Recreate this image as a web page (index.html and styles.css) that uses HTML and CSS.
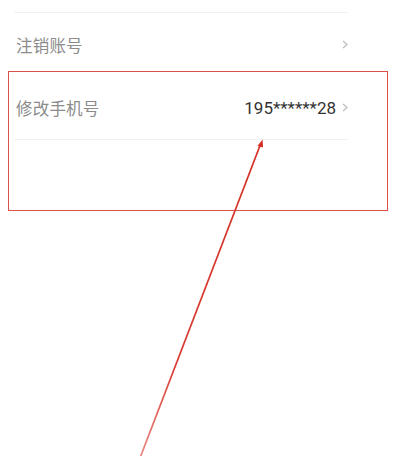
FILE: index.html
```html
<!DOCTYPE html>
<html lang="zh-CN">
<head>
<meta charset="utf-8">
<title>修改手机号</title>
<link rel="stylesheet" href="styles.css">
</head>
<body>
<div class="page">
  <div class="list">
    <div class="row-top"></div>
    <div class="row">
      <span class="label">注销账号</span>
      <span class="right">
        <svg class="chev" viewBox="0 0 6 9" width="6" height="9"><path d="M1 0.8 L5 4.5 L1 8.2" fill="none" stroke="#b5b5b5" stroke-width="1.1"/></svg>
      </span>
    </div>
    <div class="row row-line">
      <span class="label">修改手机号</span>
      <span class="right">
        <span class="value">195******28</span>
        <svg class="chev" viewBox="0 0 6 9" width="6" height="9"><path d="M1 0.8 L5 4.5 L1 8.2" fill="none" stroke="#b5b5b5" stroke-width="1.1"/></svg>
      </span>
    </div>
  </div>
  <div class="highlight"></div>
  <svg class="arrow" width="400" height="456" viewBox="0 0 400 456">
    <defs>
      <linearGradient id="fade" gradientUnits="userSpaceOnUse" x1="261" y1="143" x2="140" y2="458">
        <stop offset="0" stop-color="#d42e22"/>
        <stop offset="0.7" stop-color="#d93a2f"/>
        <stop offset="1" stop-color="#e88a84"/>
      </linearGradient>
    </defs>
    <line x1="140" y1="458" x2="261" y2="143" stroke="url(#fade)" stroke-width="1.7"/>
    <path d="M262.5 139.5 L257.5 146 L263 147.5 Z" fill="#d42e22"/>
  </svg>
</div>
</body>
</html>
```
FILE: styles.css
```css
html, body {
  margin: 0;
  padding: 0;
  background: #ffffff;
}
.page {
  position: relative;
  width: 400px;
  height: 456px;
  overflow: hidden;
  font-family: "Noto Sans CJK SC", "Noto Sans", sans-serif;
}
.list {
  display: flex;
  flex-direction: column;
  margin: 0 52px 0 14px;
}
.row-top {
  height: 12px;
  border-bottom: 1px solid #f1f1f1;
}
.row {
  height: 63px;
  display: flex;
  align-items: center;
  justify-content: space-between;
  padding-left: 2px;
}
.row-line {
  border-bottom: 1px solid #f1f1f1;
}
.label {
  font-size: 16.5px;
  color: #8c8c8c;
  letter-spacing: 0.2px;
}
.right {
  display: flex;
  align-items: center;
  gap: 6px;
}
.value {
  font-family: Roboto, "Noto Sans", sans-serif;
  font-size: 17px;
  color: #333333;
}
.chev {
  display: block;
}
.highlight {
  position: absolute;
  left: 8px;
  top: 71px;
  width: 378px;
  height: 138px;
  border: 1.5px solid #dc5048;
}
.arrow {
  position: absolute;
  left: 0;
  top: 0;
}
```
